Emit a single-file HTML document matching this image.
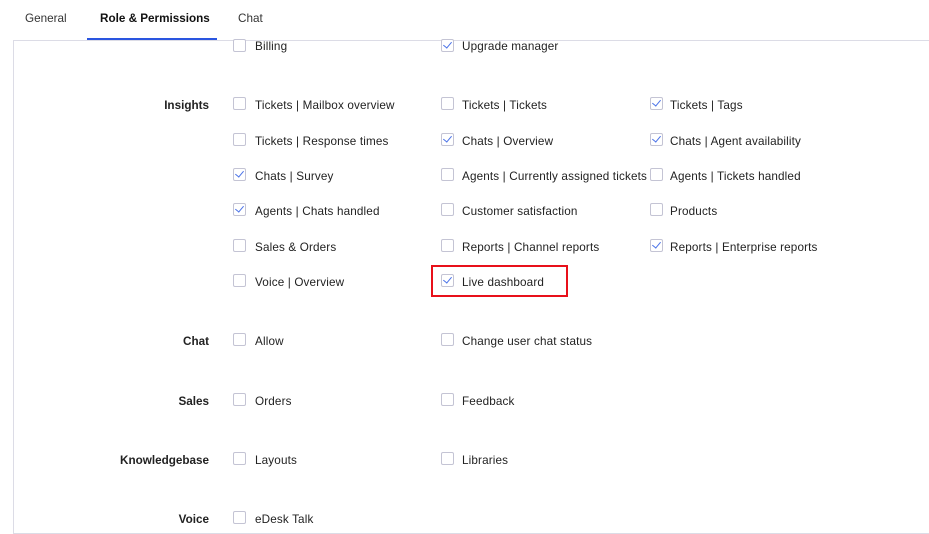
<!DOCTYPE html>
<html><head><meta charset="utf-8"><style>
body{margin:0;width:929px;height:534px;background:#fff;font-family:"Liberation Sans",sans-serif;color:#222;position:relative;overflow:hidden;font-size:11.7px}
.tab{position:absolute;top:12px;font-size:11.7px;color:#333}
.panel{position:absolute;left:13px;top:40px;width:930px;height:492px;border:1px solid #dcdce6;border-right:none}
.ul{position:absolute;left:87px;top:38px;width:130px;height:2px;background:#2a55e0}
.i{position:absolute;white-space:nowrap;line-height:14px;margin-top:1px;letter-spacing:0.15px}
.cb{position:absolute;width:11px;height:11px;border:1px solid #c4c4d4;border-radius:2px;background:#fff}
.cb.c::after{content:"";position:absolute;left:3px;top:0px;width:4px;height:7px;border:solid #4a72e8;border-width:0 1.3px 1.3px 0;transform:rotate(40deg)}
.l{position:absolute;font-weight:bold;right:720px;line-height:14px;margin-top:1px}
.red{position:absolute;left:431px;top:265px;width:133px;height:28px;border:2px solid #e8101a}
</style></head><body>
<div class="tab" style="left:25px">General</div>
<div class="tab" style="left:100px;font-weight:bold;color:#111">Role &amp; Permissions</div>
<div class="tab" style="left:238px">Chat</div>
<div class="panel"></div>
<div class="ul"></div>

<div class="cb" style="left:233px;top:39px"></div><div class="i" style="left:255px;top:39px">Billing</div>
<div class="cb c" style="left:441px;top:39px"></div><div class="i" style="left:462px;top:39px">Upgrade manager</div>

<div class="l" style="top:98px">Insights</div>
<div class="cb" style="left:233px;top:97px"></div><div class="i" style="left:255px;top:98px">Tickets | Mailbox overview</div>
<div class="cb" style="left:441px;top:97px"></div><div class="i" style="left:462px;top:98px">Tickets | Tickets</div>
<div class="cb c" style="left:650px;top:97px"></div><div class="i" style="left:670px;top:98px">Tickets | Tags</div>

<div class="cb" style="left:233px;top:133px"></div><div class="i" style="left:255px;top:134px">Tickets | Response times</div>
<div class="cb c" style="left:441px;top:133px"></div><div class="i" style="left:462px;top:134px">Chats | Overview</div>
<div class="cb c" style="left:650px;top:133px"></div><div class="i" style="left:670px;top:134px">Chats | Agent availability</div>

<div class="cb c" style="left:233px;top:168px"></div><div class="i" style="left:255px;top:169px">Chats | Survey</div>
<div class="cb" style="left:441px;top:168px"></div><div class="i" style="left:462px;top:169px">Agents | Currently assigned tickets</div>
<div class="cb" style="left:650px;top:168px"></div><div class="i" style="left:670px;top:169px">Agents | Tickets handled</div>

<div class="cb c" style="left:233px;top:203px"></div><div class="i" style="left:255px;top:204px">Agents | Chats handled</div>
<div class="cb" style="left:441px;top:203px"></div><div class="i" style="left:462px;top:204px">Customer satisfaction</div>
<div class="cb" style="left:650px;top:203px"></div><div class="i" style="left:670px;top:204px">Products</div>

<div class="cb" style="left:233px;top:239px"></div><div class="i" style="left:255px;top:240px">Sales &amp; Orders</div>
<div class="cb" style="left:441px;top:239px"></div><div class="i" style="left:462px;top:240px">Reports | Channel reports</div>
<div class="cb c" style="left:650px;top:239px"></div><div class="i" style="left:670px;top:240px">Reports | Enterprise reports</div>

<div class="cb" style="left:233px;top:274px"></div><div class="i" style="left:255px;top:275px">Voice | Overview</div>
<div class="cb c" style="left:441px;top:274px"></div><div class="i" style="left:462px;top:275px">Live dashboard</div>
<div class="red"></div>

<div class="l" style="top:334px">Chat</div>
<div class="cb" style="left:233px;top:333px"></div><div class="i" style="left:255px;top:334px">Allow</div>
<div class="cb" style="left:441px;top:333px"></div><div class="i" style="left:462px;top:334px">Change user chat status</div>

<div class="l" style="top:394px">Sales</div>
<div class="cb" style="left:233px;top:393px"></div><div class="i" style="left:255px;top:394px">Orders</div>
<div class="cb" style="left:441px;top:393px"></div><div class="i" style="left:462px;top:394px">Feedback</div>

<div class="l" style="top:453px">Knowledgebase</div>
<div class="cb" style="left:233px;top:452px"></div><div class="i" style="left:255px;top:453px">Layouts</div>
<div class="cb" style="left:441px;top:452px"></div><div class="i" style="left:462px;top:453px">Libraries</div>

<div class="l" style="top:512px">Voice</div>
<div class="cb" style="left:233px;top:511px"></div><div class="i" style="left:255px;top:512px">eDesk Talk</div>
</body></html>
